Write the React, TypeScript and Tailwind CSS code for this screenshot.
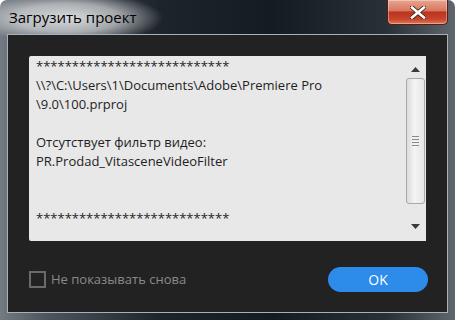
import { Check } from 'lucide-react'

const stars = '***************************'

const lines = [
  stars,
  '\\\\?\\C:\\Users\\1\\Documents\\Adobe\\Premiere Pro',
  '\\9.0\\100.prproj',
  '',
  'Отсутствует фильтр видео:',
  'PR.Prodad_VitasceneVideoFilter',
  '',
  '',
  stars,
]

function ScrollBar() {
  return (
    <div className="flex w-[21px] flex-col items-center bg-[#e8e8e8] pt-[5px] pb-[6px]">
      <div className="flex h-[17px] w-full items-center justify-center">
        <svg width="9" height="5" viewBox="0 0 9 5">
          <path d="M0 5 L4.5 0 L9 5 Z" fill="#3a3a3a" />
        </svg>
      </div>
      <div className="flex h-[126px] w-[19px] flex-col items-center justify-center gap-[2px] rounded-[3px] border border-[#a9a9a9] bg-[linear-gradient(90deg,#dcdcdc,#f4f4f4_45%,#e6e6e6)]">
        <div className="h-px w-[7px] bg-[#8a8a8a]" />
        <div className="h-px w-[7px] bg-[#8a8a8a]" />
        <div className="h-px w-[7px] bg-[#8a8a8a]" />
        <div className="h-px w-[7px] bg-[#8a8a8a]" />
      </div>
      <div className="flex-1" />
      <div className="flex h-[17px] w-full items-center justify-center">
        <svg width="9" height="5" viewBox="0 0 9 5">
          <path d="M0 0 L4.5 5 L9 0 Z" fill="#3a3a3a" />
        </svg>
      </div>
    </div>
  )
}

export default function App() {
  const checked = false
  return (
    <div className="relative h-[320px] w-[455px] overflow-hidden rounded-t-[7px] bg-[radial-gradient(ellipse_95px_26px_at_68px_18px,rgba(255,255,255,0.8)_0%,rgba(255,255,255,0.55)_55%,rgba(255,255,255,0)_100%),linear-gradient(90deg,#737a82_0%,#4d555e_10%,#1d242c_35%,#151b22_60%,#2a3038_85%,#5f666e_100%)] font-['Segoe_UI','Open_Sans','Noto_Sans',sans-serif]">
      <div className="flex h-[34px] items-center px-[9px]">
        <span className="text-[15px] leading-none text-black">Загрузить проект</span>
      </div>

      <button className="absolute top-0 right-[7px] flex h-[25px] w-[61px] items-center justify-center rounded-b-[5px] border border-t-0 border-[#5a1c14] bg-[linear-gradient(180deg,#e8a692_0%,#d8765c_45%,#b83420_50%,#c8442c_80%,#e07a56_100%)] shadow-[inset_0_0_0_1px_rgba(255,255,255,0.35)]">
        <svg width="16" height="13" viewBox="0 0 16 13">
          <path d="M2 1.5 L14 11.5 M14 1.5 L2 11.5" stroke="#3a1a14" strokeWidth="4.2" strokeLinecap="square" />
          <path d="M2 1.5 L14 11.5 M14 1.5 L2 11.5" stroke="#ffffff" strokeWidth="2.6" strokeLinecap="square" />
        </svg>
      </button>

      <div className="mx-[7px] flex h-[279px] flex-col border border-[#aab0b8] bg-[#222222] px-[21px] pt-[21px]">
        <div className="flex h-[185px] rounded-[2px] bg-[#e8e8e8]">
          <div className="flex-1 pt-[1px] pl-[7px] text-[13px] leading-[19px] text-[#1e1e1e]">
            {lines.map((l, i) => (
              <div key={i} className="h-[19px] whitespace-pre">
                {l}
              </div>
            ))}
          </div>
          <ScrollBar />
        </div>

        <div className="mt-[26px] flex items-center justify-between">
          <label className="flex items-center gap-[5px] text-[13px] text-[#8a8a8a]">
            <span className="flex h-[17px] w-[17px] items-center justify-center border-2 border-[#6a6a6a]">
              {checked && <Check size={12} />}
            </span>
            Не показывать снова
          </label>
          <button className="mr-[-2px] h-[25px] w-[100px] rounded-full bg-[#2d8be9] text-[14px] text-white">
            OK
          </button>
        </div>
      </div>
    </div>
  )
}
